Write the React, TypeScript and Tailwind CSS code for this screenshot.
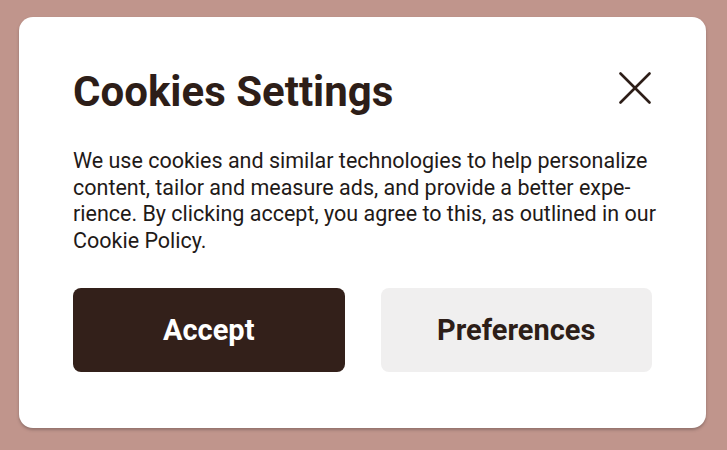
import React from 'react';

const App: React.FC = () => {
  return (
    <div className="w-[727px] h-[450px] bg-[#c0958c] pt-[17px] pl-[19px] font-['Roboto',_'Liberation_Sans',_sans-serif]">
      <div className="w-[687px] h-[411px] bg-white rounded-[14px] shadow-[0_2px_3px_rgba(60,50,50,0.35)] px-[54px] pt-[50px] flex flex-col">
        {/* Header */}
        <div className="flex items-start justify-between">
          <h2 className="text-[42px] leading-[50px] font-bold text-[#2d1e18]">Cookies Settings</h2>
          <button className="mt-[5px] mr-[1px] text-[#2d1e18]">
            <svg width="32" height="32" viewBox="0 0 32 32" fill="none" stroke="currentColor" strokeWidth="2.6" strokeLinecap="round">
              <line x1="1.5" y1="1.5" x2="30.5" y2="30.5" />
              <line x1="30.5" y1="1.5" x2="1.5" y2="30.5" />
            </svg>
          </button>
        </div>

        <p lang="en" className="mt-[31px] -mr-[10px] text-[21.5px] leading-[26.6px] text-[#1f1a18]">
          We use cookies and similar technologies to help personalize content, tailor and measure ads, and provide a better expe{'\u00AD'}rience. By clicking accept, you agree to this, as outlined in our Cookie Policy.
        </p>

        <div className="mt-[34px] grid grid-cols-2 gap-[36px]">
          <button className="h-[84px] rounded-[8px] bg-[#33201a] text-white text-[29px] font-bold">Accept</button>
          <button className="h-[84px] rounded-[8px] bg-[#f0efef] text-[#2d1e18] text-[29px] font-bold">Preferences</button>
        </div>
      </div>
    </div>
  );
};

export default App;
